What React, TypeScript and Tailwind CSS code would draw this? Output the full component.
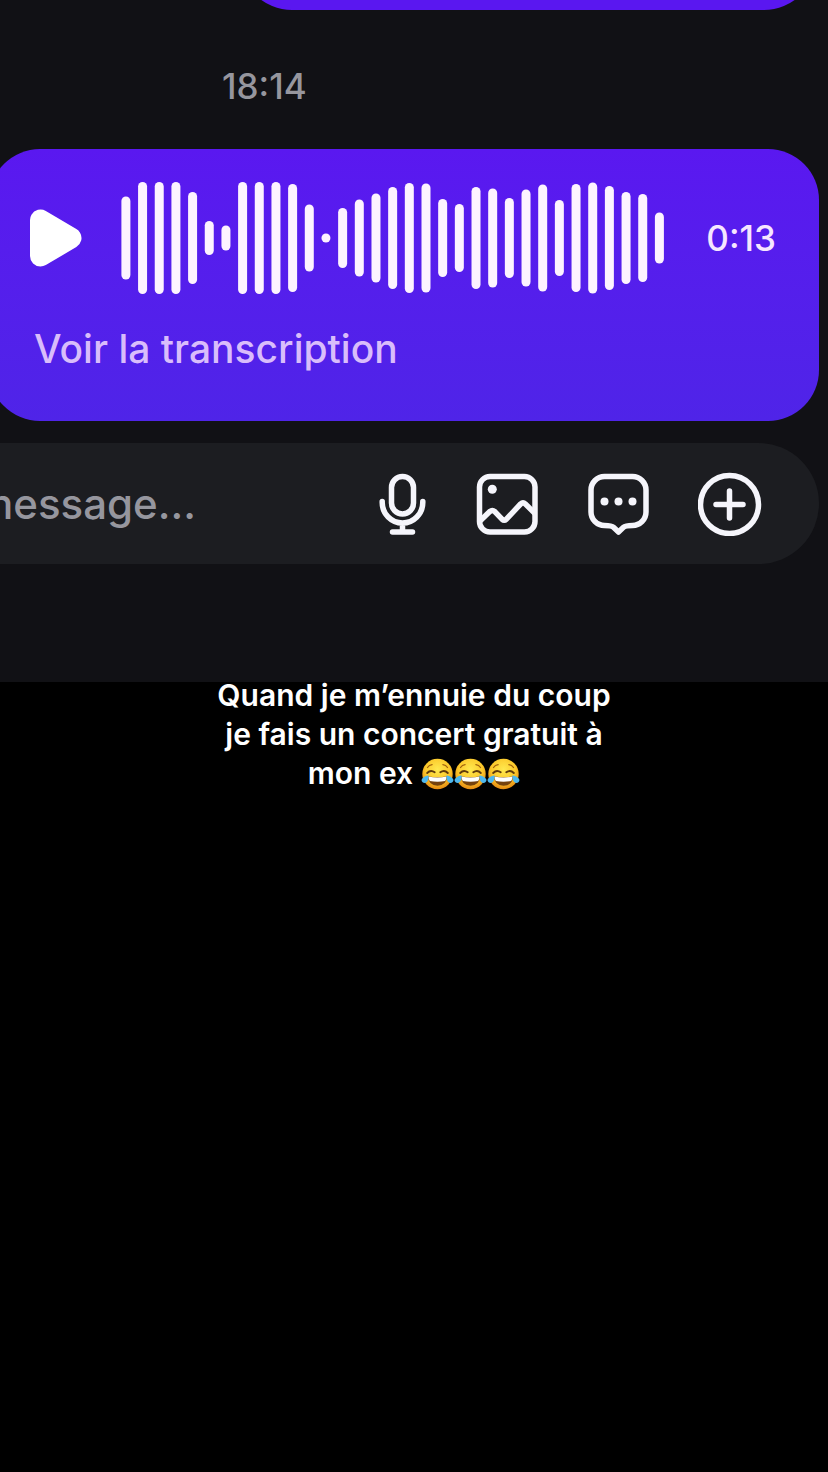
const levels = [
  83, 112, 112, 112, 92, 34, 25, 112, 112, 112, 108, 67, 9, 60, 77, 89, 102,
  110, 109, 78, 68, 102, 99, 80, 97, 107, 76, 108, 111, 104, 92, 88, 51,
];

const Waveform = () => {
  const step = 533.5 / (levels.length - 1);

  return (
    <svg className="h-28 w-[544px] shrink-0" viewBox="0 0 544 112" fill="#fdf3ff" aria-hidden="true">
      {levels.map((h, i) => (
        <rect key={i} x={i * step + 0.4} y={56 - h / 2} width="9" height={h} rx="4.5" />
      ))}
    </svg>
  );
};

const PlayIcon = () => (
  <svg className="h-[58px] w-[52px]" viewBox="0 0 52 58" fill="#fff" stroke="#fff" strokeWidth="21" strokeLinejoin="round">
    <path d="M10.5 11v36L41 29z" />
  </svg>
);

const MicIcon = () => (
  <svg className="h-16 w-12" viewBox="0 0 48 64" fill="none" stroke="currentColor" strokeWidth="5.5" strokeLinecap="round">
    <rect x="12.5" y="4.5" width="22" height="37.5" rx="11" />
    <path d="M3.2 29.5v1a20.300 20.500 0 0 0 40.600 0v-1M23.500 51v8M13.500 60h20" />
  </svg>
);

const PhotoIcon = () => (
  <svg className="h-16 w-[62px]" viewBox="0 0 62 64" fill="none" stroke="currentColor" strokeWidth="5.5" strokeLinejoin="round">
    <rect x="3.5" y="4.5" width="55.5" height="55.5" rx="10.5" />
    <circle cx="16.3" cy="17.3" r="4.5" fill="currentColor" stroke="none" />
    <path d="M4 49l9.800-9.400q2.500-2.200 5 0l7.200 7.600q2.200 2 4.400 0l14.200-15.200q2.400-2.300 4.800 0L59 41.500" />
  </svg>
);

const StickerIcon = () => (
  <svg className="h-16 w-[62px]" viewBox="0 0 62 64" fill="none" stroke="currentColor" strokeWidth="5.5" strokeLinejoin="round">
    <path d="M17.500 4.500h28a13.500 13.500 0 0 1 13.500 13.500v22a13.500 13.500 0 0 1-13.500 13.500q-7 0-9 1.800l-5 4.700-5-4.700q-2-1.800-9-1.800A13.500 13.500 0 0 1 4 40V18A13.500 13.500 0 0 1 17.500 4.500z" />
    <g fill="currentColor" stroke="none">
      <circle cx="17.500" cy="29.500" r="4" />
      <circle cx="31.500" cy="29.500" r="4" />
      <circle cx="45.500" cy="29.500" r="4" />
    </g>
  </svg>
);

const PlusIcon = () => (
  <svg className="size-16" viewBox="0 0 64 64" fill="none" stroke="currentColor" strokeWidth="5.5" strokeLinecap="round">
    <circle cx="31.5" cy="32.5" r="29" />
    <path d="M31.5 19v27M18 32.500h27" />
  </svg>
);

const Joy = () => (
  <svg className="h-8 w-[33px]" viewBox="0 0 33 32" aria-hidden="true">
    <defs>
      <radialGradient id="face" cx="0.5" cy="0.35" r="0.65">
        <stop offset="0" stopColor="#ffe94f" />
        <stop offset="0.6" stopColor="#fcc92b" />
        <stop offset="1" stopColor="#e58a12" />
      </radialGradient>
    </defs>
    <circle cx="16.5" cy="16" r="15.2" fill="url(#face)" />
    <path d="M6.5 9.5q1.6-2.3 4.6-2.8M21.9 6.7q3 .5 4.6 2.8" fill="none" stroke="#a2630e" strokeWidth="1.3" strokeLinecap="round" />
    <path d="M6.2 15q3.4-3.6 7.5-.7M19.3 14.3q4.1-2.9 7.5.7" fill="none" stroke="#5f3a0c" strokeWidth="1.9" strokeLinecap="round" />
    <path d="M6.8 18.3q9.7 1.9 19.4 0-.8 9.4-9.7 9.4t-9.7-9.4z" fill="#75420d" />
    <path d="M7.4 18.600q9.100 1.700 18.200 0-.1 3-1.400 4.400-7.700 1.300-15.400 0-1.300-1.400-1.400-4.400z" fill="#fff" />
    <path d="M7.400 17.200q.6 4.600-1.600 6.800-2.200 1.900-4.200.3-2-2-.1-4.100Q3.200 18.400 7.400 17.200zM25.600 17.200q-.6 4.600 1.600 6.800 2.200 1.900 4.200.3 2-2 .1-4.100-1.700-1.800-5.900-3z" fill="#4db8ee" />
  </svg>
);

const Composer = () => (
  <form
    className="mr-[9px] -ml-16 mt-[22px] flex h-[121px] items-center gap-[49px] rounded-r-full bg-[#1c1d21] pr-[57px] pl-10 text-[#f5f5fb]"
    onSubmit={(e) => e.preventDefault()}
  >
    <input
      type="text"
      aria-label="message"
      placeholder="message..."
      className="h-16 min-w-0 flex-1 bg-transparent text-[42px] font-medium outline-none placeholder:text-[#96969e]"
    />
    <button type="button" aria-label="Micro"><MicIcon /></button>
    <button type="button" aria-label="Photo"><PhotoIcon /></button>
    <button type="button" aria-label="Sticker"><StickerIcon /></button>
    <button type="button" aria-label="Plus"><PlusIcon /></button>
  </form>
);

const App = () => {
  return (
    <main className="min-h-screen overflow-x-hidden bg-black font-['Inter',sans-serif]">
      <section className="overflow-hidden bg-[#111115] pb-[118px]">
        <div className="-mt-[98px] mr-3 ml-auto h-[108px] w-[576px] rounded-[52px] bg-[#5a17f0]"></div>

        <time className="mt-[52px] ml-[222px] block text-[35px] leading-12 font-medium text-[#96969e]">18:14</time>

        <div className="mt-[39px] mr-[9px] -ml-[11px] rounded-[51px] bg-linear-to-b from-[#5a18f0] to-[#4f24e8] px-[41px] pt-[33px] pb-[46px]">
          <div className="flex items-center">
            <button type="button" aria-label="Lire" className="mr-[39px] shrink-0"><PlayIcon /></button>
            <Waveform />
            <span className="mr-[2px] ml-auto text-[35px] leading-10 font-medium text-[#f6e6ff]">0:13</span>
          </div>
          <button type="button" className="mt-[29px] block pl-1 text-[39px] leading-[52px] font-medium text-[#d9bdfb]">
            Voir la transcription
          </button>
        </div>

        <Composer />
      </section>

      <p className="relative -mt-[6px] text-center text-[30px] leading-[39px] font-semibold text-white">
        Quand je m’ennuie du coup
        <br />
        je fais un concert gratuit à
        <br />
        <span className="flex items-center justify-center">
          <span className="mr-2">mon ex</span>
          <Joy />
          <Joy />
          <Joy />
        </span>
      </p>
    </main>
  );
};

export default App;
